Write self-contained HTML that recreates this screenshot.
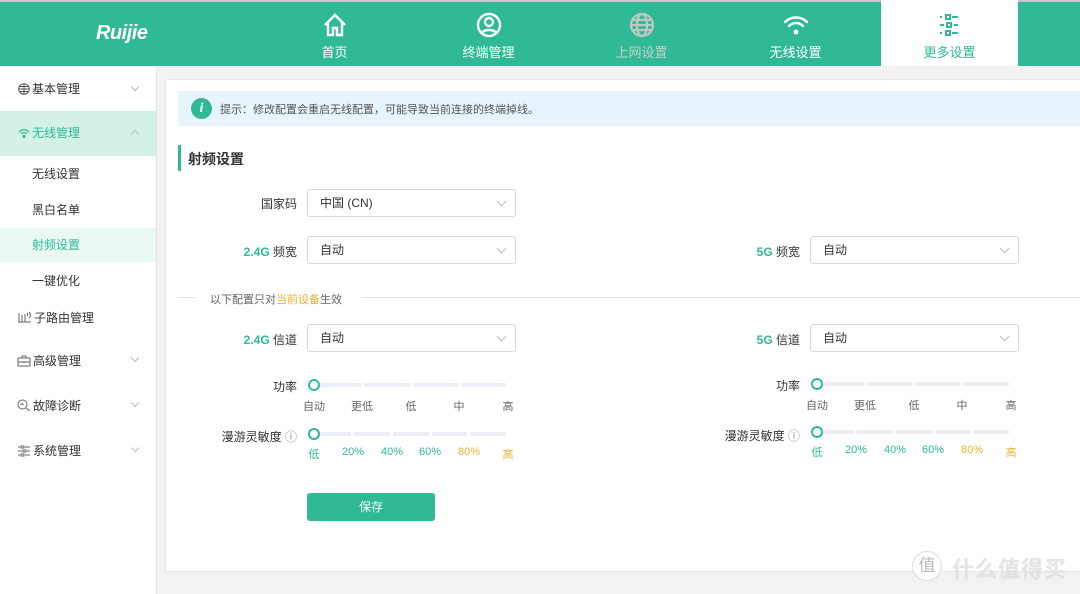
<!DOCTYPE html>
<html><head><meta charset="utf-8"><style>
*{margin:0;padding:0;box-sizing:border-box}
body{width:1080px;height:594px;overflow:hidden;position:relative;background:#f2f2f2;font-family:"Liberation Sans","Noto Sans CJK SC",sans-serif;font-size:12px;color:#333}
.a{position:absolute}
.hdr{left:0;top:0;width:1080px;height:66px;background:#2fba95;border-top:2px solid #c8c8cc}
.nav{top:0;height:66px;width:137px;text-align:center;color:#fff;font-size:13px}
.nav svg{position:absolute;left:50%;top:12px;transform:translateX(-50%)}
.nav span{position:absolute;left:0;right:0;top:42px}
.side{left:0;top:66px;width:157px;height:528px;background:#fff;border-right:1px solid #e4e4e4}
.si{left:0;width:156px;font-size:12px;color:#333}
.si svg{vertical-align:-2px;margin-right:2px}
.chev{position:absolute;right:18px;width:6px;height:6px;border-right:1px solid #bbb;border-bottom:1px solid #bbb;transform:rotate(45deg)}
.card{left:165px;top:79px;width:930px;height:493px;background:#fff;border:1px solid #e8e8e8}
.lbl{font-size:12px;color:#333;text-align:right;width:120px}
.sel{width:209px;height:28px;border:1px solid #d9d9d9;border-radius:3px;background:#fff;padding-left:12px;line-height:26px;font-size:12px}
.sel:after{content:"";position:absolute;right:10px;top:8px;width:6px;height:6px;border-right:1px solid #bbb;border-bottom:1px solid #bbb;transform:rotate(45deg)}
.trk{height:4px;background:#eceef3}
.gap{width:3px;height:4px;background:#fff}
.knob{width:12px;height:12px;border:2px solid #2fba95;border-radius:50%;background:#fff}
.tk{font-size:11px;color:#666;text-align:center;width:40px}
.g{color:#2fba95}.y{color:#e8b330}
</style></head><body>
<div class="a hdr"></div>
<div class="a" style="left:96px;top:22px;color:#fff;font-size:20px;font-style:italic;font-weight:bold;font-family:'Liberation Sans',sans-serif;letter-spacing:-0.5px">Ruijie</div>
<div class="a nav" style="left:266px"><svg width="26" height="26" viewBox="0 0 26 26" fill="none" stroke="#fff" stroke-width="2.4"><path d="M3 13 13 3l10 10M6 10v13h5v-7h4v7h5V10"/></svg><span>首页</span></div>
<div class="a nav" style="left:420px"><svg width="26" height="26" viewBox="0 0 26 26" fill="none" stroke="#fff" stroke-width="2.4"><circle cx="13" cy="13" r="11"/><circle cx="13" cy="10" r="4"/><path d="M6 21c2-4 12-4 14 0"/></svg><span>终端管理</span></div>
<div class="a nav" style="left:573px;color:#bfd3cb"><svg width="26" height="26" viewBox="0 0 26 26" fill="none" stroke="#c0c8c4" stroke-width="2.2"><circle cx="13" cy="13" r="11"/><ellipse cx="13" cy="13" rx="5" ry="11"/><path d="M2 13h22M4 8h18M4 18h18"/></svg><span>上网设置</span></div>
<div class="a nav" style="left:727px"><svg width="26" height="26" viewBox="0 0 26 26" fill="none" stroke="#fff" stroke-width="2.4" stroke-linecap="round"><path d="M2 10c6-6 16-6 22 0M6 14c4-4 10-4 14 0"/><circle cx="13" cy="20" r="2.4" fill="#fff" stroke="none"/></svg><span>无线设置</span></div>
<div class="a nav" style="left:881px;background:#fff;color:#2fba95"><svg width="26" height="26" viewBox="0 0 26 26" fill="none" stroke="#2fba95" stroke-width="2"><path d="M3 5h2M15 5h6M3 13h4M17 13h4M3 21h2M15 21h6"/><rect x="9" y="3" width="4" height="4"/><rect x="10" y="11" width="4" height="4"/><rect x="9" y="19" width="4" height="4"/></svg><span>更多设置</span></div>

<div class="a side"></div>
<div class="a si" style="top:78px;height:22px;line-height:22px;padding-left:18px"><svg width="12" height="12" viewBox="0 0 12 12" fill="none" stroke="#555"><circle cx="6" cy="6" r="5.3"/><path d="M1 6h10M6 1v10M2 3.5h8M2 8.5h8"/></svg>基本管理<i class="chev" style="top:6px"></i></div>
<div class="a si g" style="top:111px;height:45px;line-height:45px;background:#d4f1e7;padding-left:18px"><svg width="12" height="12" viewBox="0 0 12 12" fill="none" stroke="#2fba95" stroke-width="1.2"><path d="M1 5c3-3 7-3 10 0M3 7c2-2 4-2 6 0"/><circle cx="6" cy="9.5" r="1" fill="#2fba95"/></svg>无线管理<i class="chev" style="top:20px;transform:rotate(-135deg)"></i></div>
<div class="a si" style="top:164px;line-height:20px;padding-left:32px">无线设置</div>
<div class="a si" style="top:200px;line-height:20px;padding-left:32px">黑白名单</div>
<div class="a si g" style="top:228px;height:34px;line-height:34px;background:#eaf8f3;padding-left:32px">射频设置</div>
<div class="a si" style="top:271px;line-height:20px;padding-left:32px">一键优化</div>
<div class="a si" style="top:308px;line-height:20px;padding-left:17px"><svg width="15" height="14" viewBox="0 0 15 14" fill="none" stroke="#666"><path d="M1 12h13M2 12V3M5 12V5M8 12V4"/><path d="M10 3c1 1 1 2 0 3M12 2c2 2 2 4 0 6"/></svg>子路由管理</div>
<div class="a si" style="top:351px;line-height:20px;padding-left:17px"><svg width="14" height="12" viewBox="0 0 14 12" fill="none" stroke="#666"><rect x="1" y="3" width="12" height="8"/><path d="M5 3V1h4v2M1 7h12M7 6v2"/></svg>高级管理<i class="chev" style="top:4px"></i></div>
<div class="a si" style="top:396px;line-height:20px;padding-left:17px"><svg width="14" height="13" viewBox="0 0 14 13" fill="none" stroke="#666"><circle cx="5.5" cy="5.5" r="4.5"/><path d="M9 9l4 3M3.5 6l1.5-1.5 1.5 1.5"/></svg>故障诊断<i class="chev" style="top:4px"></i></div>
<div class="a si" style="top:441px;line-height:20px;padding-left:17px"><svg width="14" height="12" viewBox="0 0 14 12" fill="none" stroke="#666"><path d="M1 2h2M8 2h5M1 6h4M10 6h3M1 10h2M8 10h5"/><rect x="4" y="1" width="3" height="2"/><rect x="6" y="5" width="3" height="2"/><rect x="4" y="9" width="3" height="2"/></svg>系统管理<i class="chev" style="top:4px"></i></div>

<div class="a card"></div>
<div class="a" style="left:178px;top:91px;width:902px;height:35px;background:#e8f4fd"></div>
<div class="a" style="left:191px;top:98px;width:21px;height:21px;border-radius:50%;background:#2fba95;color:#fff;font:italic bold 14px 'Liberation Serif',serif;text-align:center;line-height:21px">i</div>
<div class="a" style="left:220px;top:101px;font-size:11px;color:#555">提示：修改配置会重启无线配置，可能导致当前连接的终端掉线。</div>
<div class="a" style="left:178px;top:145px;width:3px;height:26px;background:#2fba95"></div>
<div class="a" style="left:188px;top:149px;font-size:14px;font-weight:bold;color:#333">射频设置</div>

<div class="a lbl" style="left:177px;top:195px">国家码</div>
<div class="a sel" style="left:307px;top:189px">中国 (CN)</div>
<div class="a lbl" style="left:177px;top:243px"><b class="g">2.4G</b> 频宽</div>
<div class="a sel" style="left:307px;top:236px">自动</div>
<div class="a lbl" style="left:680px;top:243px"><b class="g">5G</b> 频宽</div>
<div class="a sel" style="left:810px;top:236px">自动</div>

<div class="a" style="left:178px;top:297px;width:18px;height:1px;background:#e4e4e4"></div>
<div class="a" style="left:210px;top:291px;font-size:11px;color:#666">以下配置只对<span class="y">当前设备</span>生效</div>
<div class="a" style="left:362px;top:297px;width:718px;height:1px;background:#e4e4e4"></div>

<div class="a lbl" style="left:177px;top:331px"><b class="g">2.4G</b> 信道</div>
<div class="a sel" style="left:307px;top:324px">自动</div>
<div class="a lbl" style="left:680px;top:331px"><b class="g">5G</b> 信道</div>
<div class="a sel" style="left:810px;top:324px">自动</div>

<!-- left sliders -->
<div class="a lbl" style="left:177px;top:378px">功率</div>
<div class="a trk" style="left:314px;top:383px;width:192px"></div>
<div class="a gap" style="left:361px;top:383px"></div><div class="a gap" style="left:410px;top:383px"></div><div class="a gap" style="left:458px;top:383px"></div>
<div class="a knob" style="left:308px;top:379px"></div>
<div class="a tk" style="left:294px;top:398px">自动</div><div class="a tk" style="left:342px;top:398px">更低</div><div class="a tk" style="left:391px;top:398px">低</div><div class="a tk" style="left:439px;top:398px">中</div><div class="a tk" style="left:488px;top:398px">高</div>
<div class="a lbl" style="left:177px;top:428px">漫游灵敏度 <span style="color:#888">ⓘ</span></div>
<div class="a trk" style="left:314px;top:432px;width:192px"></div>
<div class="a gap" style="left:351px;top:432px"></div><div class="a gap" style="left:390px;top:432px"></div><div class="a gap" style="left:429px;top:432px"></div><div class="a gap" style="left:467px;top:432px"></div>
<div class="a knob" style="left:308px;top:428px"></div>
<div class="a tk g" style="left:294px;top:446px">低</div><div class="a tk g" style="left:333px;top:446px">20%</div><div class="a tk g" style="left:372px;top:446px">40%</div><div class="a tk g" style="left:410px;top:446px">60%</div><div class="a tk y" style="left:449px;top:446px">80%</div><div class="a tk y" style="left:488px;top:446px">高</div>

<!-- right sliders -->
<div class="a lbl" style="left:680px;top:377px">功率</div>
<div class="a trk" style="left:817px;top:382px;width:192px"></div>
<div class="a gap" style="left:864px;top:382px"></div><div class="a gap" style="left:913px;top:382px"></div><div class="a gap" style="left:961px;top:382px"></div>
<div class="a knob" style="left:811px;top:378px"></div>
<div class="a tk" style="left:797px;top:397px">自动</div><div class="a tk" style="left:845px;top:397px">更低</div><div class="a tk" style="left:894px;top:397px">低</div><div class="a tk" style="left:942px;top:397px">中</div><div class="a tk" style="left:991px;top:397px">高</div>
<div class="a lbl" style="left:680px;top:427px">漫游灵敏度 <span style="color:#888">ⓘ</span></div>
<div class="a trk" style="left:817px;top:430px;width:192px"></div>
<div class="a gap" style="left:854px;top:430px"></div><div class="a gap" style="left:893px;top:430px"></div><div class="a gap" style="left:932px;top:430px"></div><div class="a gap" style="left:970px;top:430px"></div>
<div class="a knob" style="left:811px;top:426px"></div>
<div class="a tk g" style="left:797px;top:444px">低</div><div class="a tk g" style="left:836px;top:444px">20%</div><div class="a tk g" style="left:875px;top:444px">40%</div><div class="a tk g" style="left:913px;top:444px">60%</div><div class="a tk y" style="left:952px;top:444px">80%</div><div class="a tk y" style="left:991px;top:444px">高</div>

<div class="a" style="left:307px;top:493px;width:128px;height:28px;background:#2fba95;border-radius:3px;color:#fff;text-align:center;line-height:28px;font-size:12px">保存</div>

<div class="a" style="left:912px;top:551px;width:30px;height:30px;border-radius:50%;background:#fff;border:1px solid #ddd;color:#bbb;font-size:17px;text-align:center;line-height:28px">值</div>
<div class="a" style="left:952px;top:552px;font-size:22px;color:#e6e6e6;letter-spacing:1px;text-shadow:0 0 1px #aaa">什么值得买</div>
</body></html>
